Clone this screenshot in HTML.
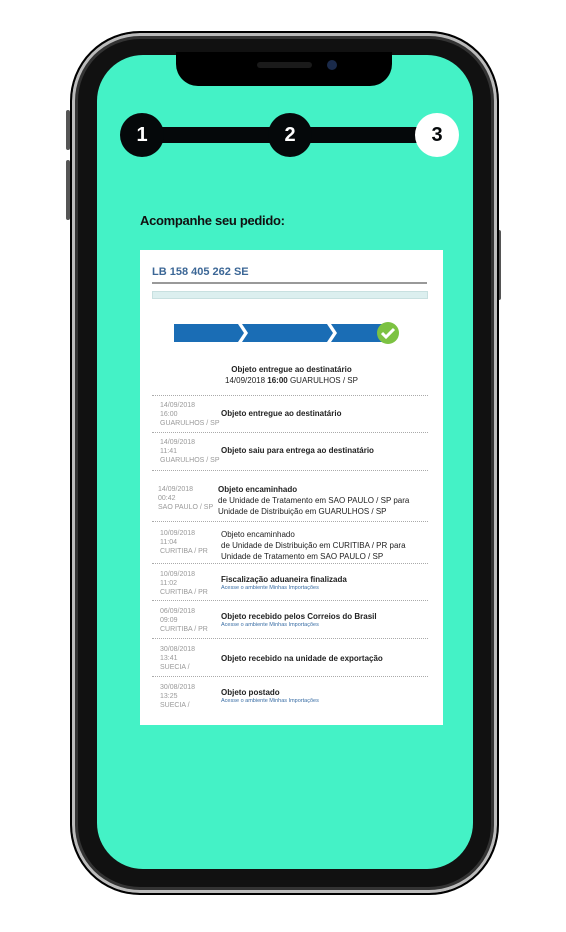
<!DOCTYPE html>
<html><head><meta charset="utf-8"><style>
*{margin:0;padding:0;box-sizing:border-box}
body{width:566px;height:932px;background:#fff;position:relative;overflow:hidden;font-family:"Liberation Sans",sans-serif}
.abs{position:absolute}
.phone{left:70px;top:31px;width:429px;height:864px;border-radius:70px;background:#111;border:2px solid #000;box-shadow:inset 0 0 0 3px #bbb,inset 0 0 0 6px #333}
.screen{left:97px;top:55px;width:376px;height:814px;border-radius:46px;background:#44f2c6;overflow:hidden}
.notch{left:176px;top:52px;width:216px;height:34px;background:#000;border-radius:0 0 22px 22px}
.circ{width:44px;height:44px;border-radius:50%;background:#05080a;color:#fff;font-weight:bold;font-size:20px;text-align:center;line-height:44px}
.card{left:140px;top:250px;width:303px;height:475px;background:#fff}
.row{position:absolute;left:12px;width:276px;border-top:1px dotted #aaa}
.d{position:absolute;left:8px;font-size:7px;color:#999;line-height:9px}
.t{position:absolute;left:69px;font-size:8px;color:#222;line-height:11px}
.t b{font-weight:bold}
.l{color:#3a6ea5;font-size:5.5px;display:block;line-height:7px}
</style></head><body>
<div class="abs" style="left:66px;top:110px;width:4px;height:40px;background:#555;border-radius:2px"></div>
<div class="abs" style="left:66px;top:160px;width:4px;height:60px;background:#555;border-radius:2px"></div>
<div class="abs" style="left:497px;top:230px;width:4px;height:70px;background:#555;border-radius:2px"></div>
<div class="abs phone"></div>
<div class="abs screen"></div>
<div class="abs notch"></div>
<div class="abs" style="left:257px;top:62px;width:55px;height:6px;border-radius:3px;background:#1a1a1a"></div>
<div class="abs" style="left:327px;top:60px;width:10px;height:10px;border-radius:50%;background:#1a2a4a"></div>
<div class="abs" style="left:142px;top:127px;width:295px;height:16px;background:#05080a"></div>
<div class="abs circ" style="left:120px;top:113px">1</div>
<div class="abs circ" style="left:268px;top:113px">2</div>
<div class="abs circ" style="left:415px;top:113px;background:#fff;color:#05080a">3</div>
<div class="abs" style="left:140px;top:213px;font-size:13px;font-weight:bold;color:#111;letter-spacing:-0.3px">Acompanhe seu pedido:</div>
<div class="abs card">
<div class="abs" style="left:12px;top:16px;font-size:11px;font-weight:bold;color:#3c6796">LB 158 405 262 SE</div>
<div class="abs" style="left:12px;top:32px;width:275px;height:2px;background:#999"></div>
<div class="abs" style="left:12px;top:41px;width:276px;height:8px;background:#dcefef;border:1px solid #c8e0e0"></div>
<svg class="abs" style="left:34px;top:70px" width="226" height="28" viewBox="0 0 226 28">
<polygon points="0,4 64,4 70,13 64,22 0,22" fill="#1a6db5"/>
<polygon points="68,4 153,4 159,13 153,22 68,22 74,13" fill="#1a6db5"/>
<polygon points="157,4 215,4 215,22 157,22 163,13" fill="#1a6db5"/>
<circle cx="214" cy="13" r="11" fill="#7cc242"/>
<path d="M208,13 l4,4 l8,-8" stroke="#fff" stroke-width="3" fill="none"/>
</svg>
<div class="abs" style="left:0;width:303px;top:114px;text-align:center;font-size:8px;line-height:11px;color:#222"><b>Objeto entregue ao destinatário</b><br>14/09/2018 <b>16:00</b> GUARULHOS / SP</div>
<div class="row" style="top:145px;height:37px"><div class="d" style="top:5px">14/09/2018<br>16:00<br>GUARULHOS / SP</div><div class="t" style="top:12px"><b>Objeto entregue ao destinatário</b></div></div>
<div class="row" style="top:182px;height:38px"><div class="d" style="top:5px">14/09/2018<br>11:41<br>GUARULHOS / SP</div><div class="t" style="top:12px"><b>Objeto saiu para entrega ao destinatário</b></div></div>
<div class="row" style="top:220px;height:51px"><div class="d" style="top:14px;left:6px">14/09/2018<br>00:42<br>SAO PAULO / SP</div><div class="t" style="top:13px;left:66px;font-size:8px;line-height:11px"><b>Objeto encaminhado</b><br>de Unidade de Tratamento em SAO PAULO / SP para Unidade de Distribuição em GUARULHOS / SP</div></div>
<div class="row" style="top:271px;height:42px"><div class="d" style="top:7px">10/09/2018<br>11:04<br>CURITIBA / PR</div><div class="t" style="top:7px;font-size:8px;line-height:11px">Objeto encaminhado<br>de Unidade de Distribuição em CURITIBA / PR para Unidade de Tratamento em SAO PAULO / SP</div></div>
<div class="row" style="top:313px;height:37px"><div class="d" style="top:6px">10/09/2018<br>11:02<br>CURITIBA / PR</div><div class="t" style="top:10px"><b>Fiscalização aduaneira finalizada</b><span class="l">Acesse o ambiente Minhas Importações</span></div></div>
<div class="row" style="top:350px;height:38px"><div class="d" style="top:6px">06/09/2018<br>09:09<br>CURITIBA / PR</div><div class="t" style="top:10px"><b>Objeto recebido pelos Correios do Brasil</b><span class="l">Acesse o ambiente Minhas Importações</span></div></div>
<div class="row" style="top:388px;height:38px"><div class="d" style="top:6px">30/08/2018<br>13:41<br>SUECIA /</div><div class="t" style="top:14px"><b>Objeto recebido na unidade de exportação</b></div></div>
<div class="row" style="top:426px;height:40px"><div class="d" style="top:6px">30/08/2018<br>13:25<br>SUECIA /</div><div class="t" style="top:10px"><b>Objeto postado</b><span class="l">Acesse o ambiente Minhas Importações</span></div></div>
</div>
</body></html>
